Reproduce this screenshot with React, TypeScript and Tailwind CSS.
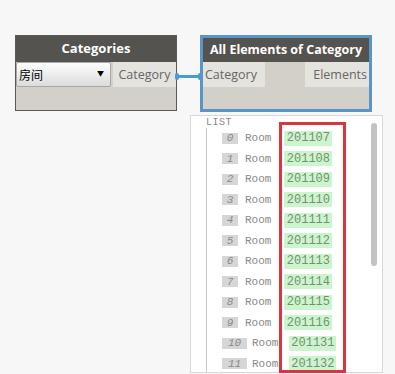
import React from "react";

const rows = [
  ["0", "201107"],
  ["1", "201108"],
  ["2", "201109"],
  ["3", "201110"],
  ["4", "201111"],
  ["5", "201112"],
  ["6", "201113"],
  ["7", "201114"],
  ["8", "201115"],
  ["9", "201116"],
  ["10", "201131"],
  ["11", "201132"],
];

export default function App() {
  const sans = { fontFamily: '"Open Sans", "Noto Sans", "Noto Sans CJK SC", sans-serif' };
  const mono = { fontFamily: '"Liberation Mono", "DejaVu Sans Mono", monospace' };
  return (
    <div className="relative w-[395px] h-[374px] overflow-hidden bg-[#f7f7f7]" style={sans}>
      {/* Categories node */}
      <div className="absolute left-[15px] top-[35px] w-[162px] h-[76px] flex flex-col border border-[#5b5954] bg-[#d3d0c9]">
        <div className="h-[26px] bg-[#555350] flex items-center justify-center text-white font-bold text-[13px]">
          Categories
        </div>
        <div className="flex items-start h-[26px]">
          <div className="w-[95px] h-[25px] rounded-[2px] border border-[#a8a8a8] bg-gradient-to-b from-[#fdfdfd] to-[#dcdcdc] flex items-center justify-between pl-[2px] pr-[6px]">
            <span className="text-[12px] text-black" style={{ fontFamily: '"Noto Sans CJK SC", sans-serif' }}>房间</span>
            <span className="text-[7px] text-black">▼</span>
          </div>
          <div className="ml-[2px] flex-1 h-[25px] bg-[#e5e3de] flex items-center justify-center pt-[2px] text-[12.5px] text-[#666]">
            Category
          </div>
        </div>
      </div>

      {/* connector */}
      <div className="absolute left-[176px] top-[75px] w-[25px] h-[3px] bg-[#4b9ad6]" />
      <div className="absolute left-[175px] top-[73px] w-[4px] h-[7px] rounded-full bg-[#4b9ad6]" />
      <div className="absolute left-[198px] top-[73px] w-[4px] h-[7px] rounded-full bg-[#4b9ad6]" />

      {/* All Elements node */}
      <div className="absolute left-[200px] top-[35px] w-[172px] h-[77px] flex flex-col border-[3px] border-[#5a95c8] bg-[#d3d0c9]">
        <div className="h-[24px] bg-[#555350] flex items-center justify-center text-white font-bold text-[12.5px] whitespace-nowrap">
          All Elements of Category
        </div>
        <div className="flex justify-between h-[25px]">
          <div className="w-[62px] bg-[#e5e3de] flex items-center pl-[2px] pt-[2px] text-[12.5px] text-[#666]">Category</div>
          <div className="w-[64px] bg-[#e5e3de] flex items-center justify-end pr-[2px] pt-[2px] text-[12.5px] text-[#666]">Elements</div>
        </div>
      </div>

      {/* preview panel */}
      <div className="absolute left-[190px] top-[115px] w-[193px] h-[258px] border border-[#d8d8d8] bg-white overflow-hidden">
        <div className="pl-[15px] pt-[2px] text-[10px] leading-[10px] uppercase text-[#8a8a8a] tracking-[0.5px]" style={mono}>
          List
        </div>
        <div className="ml-[15px] border-l border-[#c8c8c8] h-[260px] flex flex-col">
          {rows.map(([i, v]) => (
            <div key={i} className="h-[20.5px] flex items-center shrink-0 pl-[15px]">
              <div
                className={`h-[11px] bg-[#d6d6d6] flex items-center justify-center italic text-[11px] text-[#8a8a8a] ${i.length > 1 ? "w-[25px]" : "w-[16px]"}`}
                style={mono}
              >
                {i}
              </div>
              <div className={`text-[11px] text-[#8a8a8a] ${i.length > 1 ? "ml-[5px]" : "ml-[7px]"}`} style={mono}>
                Room
              </div>
              <div
                className={`h-[15px] bg-[#cdf5cd] flex items-center justify-center text-[12px] text-[#739073] ${i.length > 1 ? "ml-[11px] w-[47px]" : "ml-[13px] w-[48px]"}`}
                style={mono}
              >
                {v}
              </div>
            </div>
          ))}
        </div>
        {/* scrollbar */}
        <div className="absolute left-[180px] top-[7px] w-[6px] h-[143px] rounded-[3px] bg-[#c2c2c2]" />
      </div>

      {/* red highlight */}
      <div className="absolute left-[279px] top-[122px] w-[67px] h-[251px] border-[3px] border-[#d9353f]" />
    </div>
  );
}
